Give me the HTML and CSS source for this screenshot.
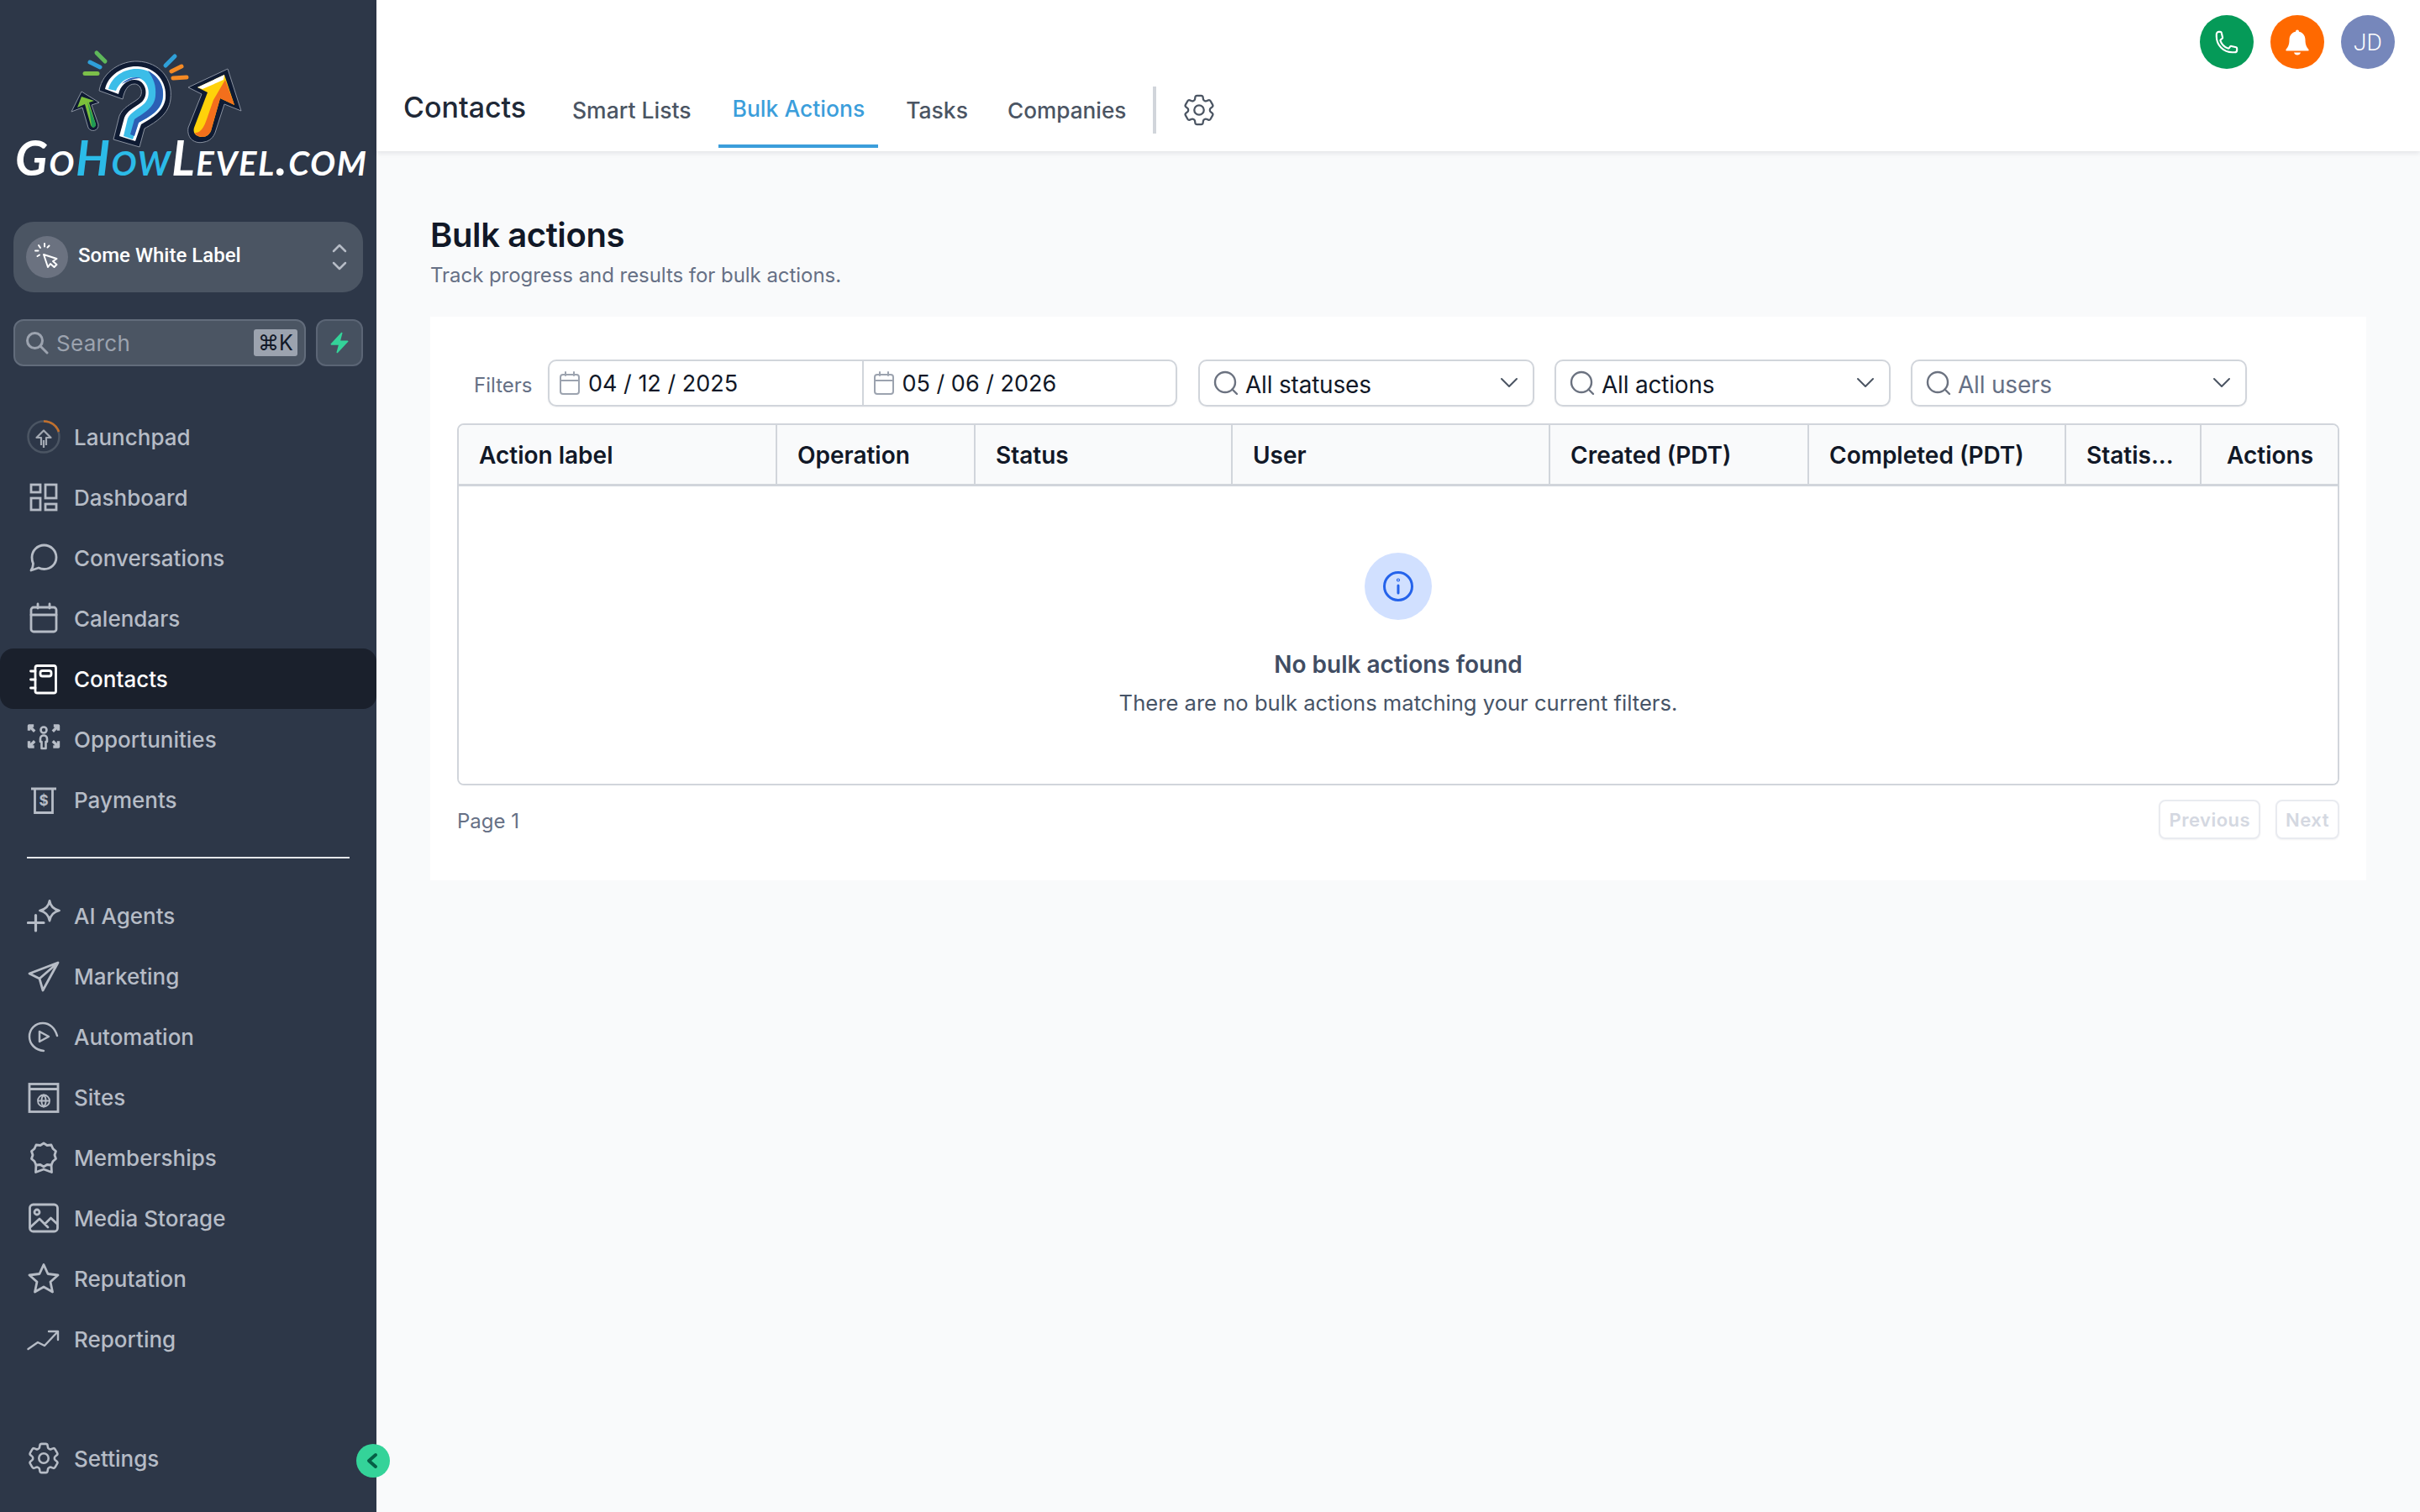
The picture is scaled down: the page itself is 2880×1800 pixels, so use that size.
FILE: index.html
```html
<!DOCTYPE html>
<html lang="en">
<head>
<meta charset="utf-8">
<title>Bulk actions</title>
<link rel="stylesheet" href="styles.css">
</head>
<body>
<div class="app">
<aside class="sidebar">
  <div class="logo">
    <svg class="logo-art" viewBox="0 43 448 178" aria-label="GoHowLevel.com logo">
      <g fill="none" stroke-linecap="round">
        <path d="M115 63l10 10" stroke="#5fb85a" stroke-width="5"/>
        <path d="M107 74l12 6" stroke="#2f9fd8" stroke-width="5"/>
        <path d="M101 87.500h15" stroke="#7cc04a" stroke-width="5"/>
        <path d="M197 78l11-11" stroke="#2f9fd8" stroke-width="5"/>
        <path d="M204 85l12-6" stroke="#f58a24" stroke-width="5"/>
        <path d="M206 93l16-1" stroke="#f58a24" stroke-width="5"/>
      </g>
      <path d="M118 108C122 84 146 72 164 73C190 74 206 94 203 118C201 136 186 145 172 153L166 175L135 166L142 138C146 128 156 124 164 118C172 112 168 100 160 100C152 100 148 108 146 118Z" fill="#0f1b33" stroke="#8a92a0" stroke-width="1"/>
      <path d="M125 106C129 88 148 78 164 79C186 80 199 98 197 117C195 132 182 140 168 148L161 168L142 162L148 140C151 132 160 128 168 122C178 114 174 95 160 95C150 95 143 103 141 112Z" fill="#fff"/>
      <path d="M129 106C133 90 150 81 164 82C184 83 196 99 194 116C192 131 180 138 165 146L158 166L147 162L152 141C155 134 164 130 171 124C182 115 177 92 160 92C149 92 141 100 138 108Z" fill="#3bbde8"/>
      <path d="M176 84C190 92 197 104 193 120C190 132 178 139 165 146L160 162L155 160L160 142C172 134 184 128 185 114C186 102 183 94 176 84ZM145 100C150 94 160 90 168 93C158 93 150 97 145 100Z" fill="#2b5fb5"/>
      <path d="M97 109L85 133L98 128L105 152C108 158 118 156 117 148L109 125L118 122Z" fill="#0f1b33" stroke="#8a92a0" stroke-width="1"/>
      <path d="M97 115L92 128L101 124L108 149C110 153 114 152 114 148L106 122L112 120Z" fill="#7cc03a"/>
      <path d="M104 121L114 148C114 152 110 153 109 150L107 135Z" fill="#1f9a55"/>
      <path d="M271 82L224 104L240 112L224 152C222 165 232 172 243 169C250 168 254 163 256 158L267 124L287 132Z" fill="#0f1b33" stroke="#8a92a0" stroke-width="1"/>
      <path d="M267 89L235 104L247 110L231 152C229 159 234 163 241 163C246 163 249 160 251 156L262 117L279 125Z" fill="#ffd20a"/>
      <path d="M268 95L279 125L262 117L251 156C249 160 246 163 241 163C236 163 232 160 232 158C240 158 243 150 246 142L254 119Z" fill="#f36f1c"/>
      <path d="M267 89L235 104L241 106L266 95Z" fill="#fff"/>
      <text class="logo-text" x="18" y="209" textLength="418" lengthAdjust="spacing"><tspan>Go</tspan><tspan class="logo-cyan">How</tspan><tspan>Level.com</tspan></text>
    </svg>
  </div>

  <div class="switcher">
    <span class="switcher-ico">
      <svg viewBox="0 0 50 50" fill="none" stroke="#fff" stroke-width="2" stroke-linecap="round" stroke-linejoin="round"><path d="M21 22L26 37L29 33L33.500 37L36.500 34L32 30L36.500 27Z"/><path d="M15 11l2 3M22 9v3.500M27.500 11.500l-2 2M11 17.500h3.500M13.500 24l2.500-1.500"/></svg>
    </span>
    <span class="switcher-name">Some White Label</span>
    <svg class="switcher-caret" viewBox="0 0 20 34" fill="none" stroke="#b6bcc6" stroke-width="2.500" stroke-linecap="round" stroke-linejoin="round"><path d="M3 10l7-7 7 7M3 24l7 7 7-7"/></svg>
  </div>

  <div class="search-row">
    <div class="search">
      <svg class="search-ico" viewBox="0 0 28 28" fill="none" stroke="#9ca3af" stroke-width="3" stroke-linecap="round"><circle cx="11.500" cy="11.500" r="9"/><path d="M18 18l8 8"/></svg>
      <span class="search-text">Search</span>
      <kbd class="kbd">⌘K</kbd>
    </div>
    <button class="bolt" type="button" aria-label="Quick actions">
      <svg viewBox="0 0 24 24" fill="#34d399"><path d="M14.615 1.595a.75.75 0 01.359.852L12.982 9.750h7.268a.75.75 0 01.548 1.262l-10.500 11.250a.75.75 0 01-1.272-.71l1.992-7.302H3.750a.75.75 0 01-.548-1.262l10.500-11.250a.75.75 0 01.913-.143z"/></svg>
    </button>
  </div>

  <nav class="nav nav-top">
    <a class="nav-item"><svg class="nav-ico" viewBox="0 0 40 40" fill="none"><circle cx="20" cy="20" r="18.500" stroke="#4b5563" stroke-width="2.500"/><path d="M20 1.500A18.500 18.500 0 0 1 38 14" stroke="#c2702c" stroke-width="2.500"/><path d="M17 30V21H11.500L20 12.500L28.500 21H23V30M20 24V33" stroke="#a3a9b3" stroke-width="2.200" stroke-linejoin="round"/></svg><span>Launchpad</span></a>
    <a class="nav-item"><svg class="nav-ico" viewBox="0 0 40 40" fill="none" stroke="currentColor" stroke-width="2.800"><rect x="5" y="5" width="11" height="9"/><rect x="5" y="21" width="11" height="14"/><rect x="22" y="5" width="13" height="16"/><rect x="22" y="28" width="13" height="7"/></svg><span>Dashboard</span></a>
    <a class="nav-item"><svg class="nav-ico" viewBox="0 0 40 40" fill="none" stroke="currentColor" stroke-width="2.800" stroke-linejoin="round"><path d="M20.500 5C28.500 5 35 11.500 35 19.500C35 27.500 28.500 33.500 20.500 33.500C18 33.500 16 33 14 32L5 35C6.500 32.500 7.500 30 7.500 27C6.500 25 6 22 6 19.500C6 11.500 12.500 5 20.500 5Z"/></svg><span>Conversations</span></a>
    <a class="nav-item"><svg class="nav-ico" viewBox="0 0 40 40" fill="none" stroke="currentColor" stroke-width="2.800" stroke-linecap="round"><rect x="5" y="7" width="30" height="29" rx="3"/><path d="M5 16H35M13 3V8M27 3V8"/></svg><span>Calendars</span></a>
    <a class="nav-item is-active"><svg class="nav-ico" viewBox="0 0 40 40" fill="none" stroke="currentColor" stroke-width="2.800" stroke-linecap="round"><path d="M10 7C10 5.500 11 4.500 12.500 4.500H32C33.500 4.500 34.500 5.500 34.500 7V35C34.500 36.500 33.500 37 32 37H12.500C11 37 10 36 10 35Z"/><rect x="16" y="10.500" width="13" height="6.500" rx="2.500"/><path d="M4.500 11H10M4.500 21H10M4.500 31H10"/></svg><span>Contacts</span></a>
    <a class="nav-item"><svg class="nav-ico" viewBox="0 0 40 40" fill="none" stroke="currentColor" stroke-width="3.400" stroke-linecap="square" stroke-linejoin="round"><circle cx="20" cy="9" r="3.500" stroke-width="2.600"/><path d="M16 23V19.500C16 17 18 15.500 20 15.500C22 15.500 24 17 24 19.500V23H22.500V31H17.500V23Z" stroke-width="2.600"/><path d="M2.500 8V4H6.500M3 4.500L8 9.500M37.500 8V4H33.500M37 4.500L32 9.500M2.500 24V29H7M3 28.500L8 23.500M37.500 24V29H33M37 28.500L32 23.500"/></svg><span>Opportunities</span></a>
    <a class="nav-item"><svg class="nav-ico" viewBox="0 0 40 40" fill="none" stroke="currentColor" stroke-width="2.800"><path d="M5 7H35M9.500 7V35.500H30.500V7"/><text class="dollar" x="20" y="27" text-anchor="middle">$</text></svg><span>Payments</span></a>
  </nav>

  <div class="nav-rule"></div>

  <nav class="nav">
    <a class="nav-item"><svg class="nav-ico" viewBox="0 0 40 40" fill="none" stroke="currentColor" stroke-width="2.800" stroke-linecap="round" stroke-linejoin="round"><path d="M27 2.500C28 8.500 32 12.500 38.500 14C32 15.500 28 20 27 26C26 20 22 15.500 15.500 14C22 12.500 26 8.500 27 2.500Z"/><path d="M1.500 28.500H20M10.500 19.500V38" stroke-width="3.200"/></svg><span>AI Agents</span></a>
    <a class="nav-item"><svg class="nav-ico" viewBox="0 0 40 40" fill="none" stroke="currentColor" stroke-width="2.800" stroke-linejoin="round"><path d="M37 4L3 17L15 23L19 37ZM37 4L15 23"/></svg><span>Marketing</span></a>
    <a class="nav-item"><svg class="nav-ico" viewBox="0 0 40 40" fill="none" stroke="currentColor" stroke-width="2.500" stroke-linecap="round" stroke-linejoin="round"><path d="M36 19C33.500 10 27 4 19 4C10 4 3 11 3 20C3 29 10 36 20 37"/><path d="M15 14L26 20L15 26Z"/></svg><span>Automation</span></a>
    <a class="nav-item"><svg class="nav-ico" viewBox="0 0 40 40" fill="none" stroke="currentColor" stroke-width="2.800"><rect x="3" y="4.500" width="34" height="33"/><path d="M3 10.500H37"/><g stroke-width="1.800"><circle cx="20" cy="24.500" r="7"/><path d="M13 24.500H27M20 17.500C16.500 21 16.500 28 20 31.500C23.500 28 23.500 21 20 17.500Z"/></g></svg><span>Sites</span></a>
    <a class="nav-item"><svg class="nav-ico" viewBox="0 0 40 40" fill="none" stroke="currentColor" stroke-width="2.800" stroke-linejoin="round"><path d="M20 3L24 5.500L29 5L31 9.500L34.500 12.500L33 17L34.500 21.500L31 24.500L29 29L24 28.500L20 31L16 28.500L11 29L9 24.500L5.500 21.500L7 17L5.500 12.500L9 9.500L11 5L16 5.500Z"/><path d="M11 28L10.500 37.500L20 34L29.500 37.500L29 28"/></svg><span>Memberships</span></a>
    <a class="nav-item"><svg class="nav-ico" viewBox="0 0 40 40" fill="none" stroke="currentColor" stroke-width="2.800" stroke-linecap="round" stroke-linejoin="round"><rect x="3.500" y="4" width="33" height="32" rx="4"/><circle cx="12" cy="13" r="3"/><path d="M4 31L15 21L25 31M21.500 27L28.500 20L36 27"/></svg><span>Media Storage</span></a>
    <a class="nav-item"><svg class="nav-ico" viewBox="0 0 40 40" fill="none" stroke="currentColor" stroke-width="2.800" stroke-linejoin="round"><path d="M20 3.500L25 14.500L37 16L28 24L30.500 36L20 30L9.500 36L12 24L3 16L15 14.500Z"/></svg><span>Reputation</span></a>
    <a class="nav-item"><svg class="nav-ico" viewBox="0 0 40 40" fill="none" stroke="currentColor" stroke-width="2.400" stroke-linecap="round" stroke-linejoin="round"><path d="M1.500 32L13 24L21 28L37 11M26 11H37V21"/></svg><span>Reporting</span></a>
  </nav>

  <a class="nav-item nav-settings"><svg class="nav-ico" viewBox="1.500 1.500 21 21" fill="none" stroke="currentColor" stroke-width="1.350" stroke-linejoin="round"><path d="M9.594 3.940c.09-.542.56-.94 1.110-.94h2.593c.55 0 1.020.398 1.110.94l.213 1.281c.063.374.313.686.645.87.074.04.147.083.22.127.324.196.72.257 1.075.124l1.217-.456a1.125 1.125 0 011.370.49l1.296 2.247a1.125 1.125 0 01-.26 1.431l-1.003.827c-.293.24-.438.613-.431.992a6.759 6.759 0 010 .255c-.007.378.138.75.43.99l1.005.828c.424.35.534.954.26 1.430l-1.298 2.247a1.125 1.125 0 01-1.369.491l-1.217-.456c-.355-.133-.75-.072-1.076.124a6.570 6.570 0 01-.22.128c-.331.183-.581.495-.644.869l-.213 1.280c-.09.543-.56.941-1.110.941h-2.594c-.55 0-1.020-.398-1.110-.94l-.213-1.281c-.062-.374-.312-.686-.644-.87a6.520 6.520 0 01-.22-.127c-.325-.196-.72-.257-1.076-.124l-1.217.456a1.125 1.125 0 01-1.369-.49l-1.297-2.247a1.125 1.125 0 01.26-1.431l1.004-.827c.292-.24.437-.613.43-.992a6.932 6.932 0 010-.255c.007-.378-.138-.75-.43-.99l-1.004-.828a1.125 1.125 0 01-.26-1.430l1.297-2.247a1.125 1.125 0 011.370-.491l1.216.456c.356.133.751.072 1.076-.124.072-.044.146-.087.22-.128.332-.183.582-.495.644-.869l.214-1.281z"/><path d="M15 12a3 3 0 11-6 0 3 3 0 016 0z"/></svg><span>Settings</span></a>
  <button class="collapse" type="button" aria-label="Collapse sidebar">
    <svg viewBox="0 0 40 40" fill="none" stroke="#065f46" stroke-width="4" stroke-linecap="round" stroke-linejoin="round"><path d="M23 13L15 20L23 27"/></svg>
  </button>
</aside>

<div class="main">
  <header class="header">
    <div class="actions">
      <span class="round round-green"><svg viewBox="0 0 24 24" fill="none" stroke="#fff" stroke-width="1.700" stroke-linejoin="round"><path d="M2.250 6.750c0 8.284 6.716 15 15 15h2.250a2.250 2.250 0 002.250-2.250v-1.372c0-.516-.351-.966-.852-1.091l-4.423-1.106c-.44-.11-.902.055-1.173.417l-.97 1.293c-.282.376-.769.542-1.210.38a12.035 12.035 0 01-7.143-7.143c-.162-.441.004-.928.38-1.210l1.293-.97c.363-.271.527-.734.417-1.173L6.963 3.102a1.125 1.125 0 00-1.091-.852H4.500A2.250 2.250 0 002.250 4.500v2.250z"/></svg></span>
      <span class="round round-orange"><svg viewBox="0 0 32 32" fill="#fff"><circle cx="16" cy="3.500" r="2"/><path d="M16 3.500C22 3.500 25.500 8 25.500 13.500C25.500 19 27 22 29.500 25C30 25.800 29.500 26.500 28.500 26.500H3.500C2.500 26.500 2 25.800 2.500 25C5 22 6.500 19 6.500 13.500C6.500 8 10 3.500 16 3.500Z"/><path d="M12 28.500H20C19.500 30.500 18 31.500 16 31.500C14 31.500 12.500 30.500 12 28.500Z"/></svg></span>
      <span class="round round-avatar">JD</span>
    </div>
    <div class="tabs">
      <h2 class="tabs-title">Contacts</h2>
      <a class="tab">Smart Lists</a>
      <a class="tab is-current">Bulk Actions</a>
      <a class="tab tab-tasks">Tasks</a>
      <a class="tab tab-last">Companies</a>
      <span class="tabs-rule"></span>
      <svg class="tabs-gear" viewBox="1.500 1.500 21 21" fill="none" stroke="#4b5563" stroke-width="1.200" stroke-linejoin="round"><path d="M9.594 3.940c.09-.542.56-.94 1.110-.94h2.593c.55 0 1.020.398 1.110.94l.213 1.281c.063.374.313.686.645.87.074.04.147.083.22.127.324.196.72.257 1.075.124l1.217-.456a1.125 1.125 0 011.370.49l1.296 2.247a1.125 1.125 0 01-.26 1.431l-1.003.827c-.293.24-.438.613-.431.992a6.759 6.759 0 010 .255c-.007.378.138.75.43.99l1.005.828c.424.35.534.954.26 1.430l-1.298 2.247a1.125 1.125 0 01-1.369.491l-1.217-.456c-.355-.133-.75-.072-1.076.124a6.570 6.570 0 01-.22.128c-.331.183-.581.495-.644.869l-.213 1.280c-.09.543-.56.941-1.110.941h-2.594c-.55 0-1.020-.398-1.110-.94l-.213-1.281c-.062-.374-.312-.686-.644-.87a6.520 6.520 0 01-.22-.127c-.325-.196-.72-.257-1.076-.124l-1.217.456a1.125 1.125 0 01-1.369-.49l-1.297-2.247a1.125 1.125 0 01.26-1.431l1.004-.827c.292-.24.437-.613.43-.992a6.932 6.932 0 010-.255c.007-.378-.138-.75-.43-.99l-1.004-.828a1.125 1.125 0 01-.26-1.430l1.297-2.247a1.125 1.125 0 011.370-.491l1.216.456c.356.133.751.072 1.076-.124.072-.044.146-.087.22-.128.332-.183.582-.495.644-.869l.214-1.281z"/><path d="M15 12a3 3 0 11-6 0 3 3 0 016 0z"/></svg>
    </div>
  </header>

  <main class="content">
    <h1 class="page-title">Bulk actions</h1>
    <p class="page-sub">Track progress and results for bulk actions.</p>

    <section class="card">
      <div class="filters">
        <span class="filters-label">Filters</span>
        <div class="dates">
          <div class="date"><svg class="cal" viewBox="0 0 24 28" fill="none" stroke="#9ca3af" stroke-width="2" stroke-linecap="round"><rect x="1" y="4" width="22" height="23" rx="3"/><path d="M1 11H23M7 1V5M17 1V5"/></svg><span>04 / 12 / 2025</span></div>
          <div class="date date-end"><svg class="cal" viewBox="0 0 24 28" fill="none" stroke="#9ca3af" stroke-width="2" stroke-linecap="round"><rect x="1" y="4" width="22" height="23" rx="3"/><path d="M1 11H23M7 1V5M17 1V5"/></svg><span>05 / 06 / 2026</span></div>
        </div>
        <div class="select"><svg class="sel-search" viewBox="0 0 30 30" fill="none" stroke="#6b7280" stroke-width="2.400" stroke-linecap="round"><circle cx="14" cy="14" r="12"/><path d="M22.500 22.500L28 28"/></svg><span>All statuses</span><svg class="sel-caret" viewBox="0 0 24 24" fill="none" stroke="#4b5563" stroke-width="2" stroke-linecap="round" stroke-linejoin="round"><path d="M3 7L12 16L21 7"/></svg></div>
        <div class="select"><svg class="sel-search" viewBox="0 0 30 30" fill="none" stroke="#6b7280" stroke-width="2.400" stroke-linecap="round"><circle cx="14" cy="14" r="12"/><path d="M22.500 22.500L28 28"/></svg><span>All actions</span><svg class="sel-caret" viewBox="0 0 24 24" fill="none" stroke="#4b5563" stroke-width="2" stroke-linecap="round" stroke-linejoin="round"><path d="M3 7L12 16L21 7"/></svg></div>
        <div class="select is-empty"><svg class="sel-search" viewBox="0 0 30 30" fill="none" stroke="#6b7280" stroke-width="2.400" stroke-linecap="round"><circle cx="14" cy="14" r="12"/><path d="M22.500 22.500L28 28"/></svg><span>All users</span><svg class="sel-caret" viewBox="0 0 24 24" fill="none" stroke="#4b5563" stroke-width="2" stroke-linecap="round" stroke-linejoin="round"><path d="M3 7L12 16L21 7"/></svg></div>
      </div>

      <div class="table">
        <div class="thead">
          <div class="th">Action label</div>
          <div class="th">Operation</div>
          <div class="th">Status</div>
          <div class="th">User</div>
          <div class="th">Created (PDT)</div>
          <div class="th">Completed (PDT)</div>
          <div class="th">Statis...</div>
          <div class="th th-last">Actions</div>
        </div>
        <div class="empty">
          <span class="empty-ico"><svg viewBox="0 0 40 40" fill="none" stroke="#2563eb" stroke-width="3" stroke-linecap="round"><circle cx="20" cy="20" r="16.500"/><path d="M20 19V28"/><circle cx="20" cy="12.500" r="0.600"/></svg></span>
          <h3 class="empty-title">No bulk actions found</h3>
          <p class="empty-text">There are no bulk actions matching your current filters.</p>
        </div>
      </div>

      <div class="pager">
        <span class="pager-page">Page 1</span>
        <div class="pager-btns">
          <button class="pager-btn" type="button" disabled>Previous</button>
          <button class="pager-btn" type="button" disabled>Next</button>
        </div>
      </div>
    </section>
  </main>
</div>
</div>
</body>
</html>
```
FILE: styles.css
```css
* { box-sizing: border-box; }
html, body { margin: 0; padding: 0; height: 100%; }
body { font-family: "Inter", "Liberation Sans", sans-serif; background: #f9fafb; color: #111827; overflow: hidden; }
h1, h2, h3, p { margin: 0; }
button { font-family: inherit; }

.app { display: flex; width: 2880px; height: 1800px; }

/* Sidebar */
.sidebar { position: relative; width: 448px; flex: none; height: 100%; background: #2d3748; display: flex; flex-direction: column; }
.logo { height: 178px; margin-top: 43px; flex: none; }
.logo-art { display: block; width: 448px; height: 178px; }
.logo-text { font-family: "Lato", sans-serif; font-style: italic; font-weight: 700; font-size: 57px; font-variant: small-caps; fill: #fff; }
.logo-cyan { fill: #2bbbe8; }

.switcher { margin: 43px 16px 0; height: 84px; flex: none; background: #4b5563; border-radius: 24px; display: flex; align-items: center; padding: 0 18px 0 15px; }
.switcher-ico { width: 50px; height: 50px; border-radius: 50%; background: #6b7280; flex: none; }
.switcher-ico svg { display: block; width: 50px; height: 50px; }
.switcher-name { font-family: "Roboto", sans-serif; font-weight: 500; font-size: 24px; color: #fff; margin-left: 12px; flex: 1; position: relative; top: -2px; }
.switcher-caret { width: 20px; height: 34px; flex: none; }

.search-row { display: flex; gap: 12px; margin: 32px 16px 0; flex: none; }
.search { flex: 1; height: 56px; background: #4b5563; border: 2px solid #626c7b; border-radius: 12px; display: flex; align-items: center; padding: 0 8px 0 12px; }
.search-ico { width: 28px; height: 28px; flex: none; }
.search-text { font-size: 26px; letter-spacing: 0.3px; color: #9ca3af; margin-left: 9px; flex: 1; font-weight: 400; }
.kbd { font-family: "Inter", sans-serif; width: 52px; height: 32px; background: #9ca3af; color: #111827; border-radius: 3px; font-size: 25px; display: flex; align-items: center; justify-content: center; }
.bolt { width: 56px; height: 56px; padding: 0; background: #465160; border: 2px solid #5b6575; border-radius: 12px; display: flex; align-items: center; justify-content: center; }
.bolt svg { width: 28px; height: 28px; }

.nav { display: flex; flex-direction: column; flex: none; }
.nav-top { margin-top: 48px; }
.nav-item { height: 72px; display: flex; align-items: center; gap: 16px; padding-left: 32px; color: #b6bcc6; font-size: 26px; font-weight: 500; border-radius: 16px; flex: none; }
.nav-ico { width: 40px; height: 40px; flex: none; }
.nav-item.is-active { background: #1a202c; color: #fff; }
.dollar { font-family: "Inter", sans-serif; font-size: 17px; font-weight: 700; fill: currentColor; stroke: none; }
.nav-rule { height: 2px; background: #e5e7eb; margin: 32px; flex: none; }
.nav-settings { margin-top: auto; margin-bottom: 28px; }
.collapse { position: absolute; left: 424px; top: 1719px; width: 40px; height: 40px; padding: 0; border: 0; border-radius: 50%; background: #34d399; }
.collapse svg { display: block; width: 40px; height: 40px; }

/* Main */
.main { flex: 1; min-width: 0; display: flex; flex-direction: column; }
.header { height: 180px; flex: none; background: #fff; box-shadow: 0 2px 6px rgba(17, 24, 39, 0.1); padding-top: 18px; position: relative; }
.actions { display: flex; justify-content: flex-end; gap: 20px; padding-right: 30px; }
.round { width: 64px; height: 64px; border-radius: 50%; display: flex; align-items: center; justify-content: center; }
.round-green { background: #059a58; }
.round-green svg { width: 30px; height: 30px; }
.round-orange { background: #ff6900; }
.round-orange svg { width: 32px; height: 32px; }
.round-avatar { background: #7687bb; color: #fff; font-family: "Roboto", sans-serif; font-size: 28px; font-weight: 300; }

.tabs { display: flex; align-items: center; height: 90px; margin-top: 4px; padding-left: 32px; }
.tabs-title { font-size: 34px; font-weight: 500; color: #1f2937; width: 185px; position: relative; top: -4px; }
.tab { height: 90px; display: flex; align-items: center; padding: 0 16px; margin-right: 17px; font-size: 26.500px; font-weight: 500; color: #4b5563; }
.tab.is-current { color: #3b9edb; border-bottom: 4px solid #3b9edb; }
.tab-tasks { margin-right: 15px; }
.tab-last { margin-right: 0; font-size: 26.200px; }
.tabs-rule { width: 4px; height: 56px; background: #d1d5db; margin-left: 16px; }
.tabs-gear { width: 40px; height: 40px; margin-left: 31px; }

/* Content */
.content { flex: 1; padding: 76px 64px 0; }
.page-title { font-size: 40px; line-height: 48px; font-weight: 600; color: #111827; letter-spacing: -0.4px; }
.page-sub { font-size: 24px; letter-spacing: -0.05px; line-height: 32px; margin-top: 8px; color: #667085; }
.card { margin-top: 33px; background: #fff; padding: 51px 32px 49px; }

.filters { display: flex; align-items: center; height: 56px; padding-left: 20px; }
.filters-label { font-size: 24px; color: #667085; width: 88px; flex: none; position: relative; top: 2px; }
.dates { width: 749px; height: 56px; flex: none; display: flex; background: #fff; border: 2px solid #d1d5db; border-radius: 10px; box-shadow: 0 1px 2px rgba(16, 24, 40, 0.05); margin-right: 25px; }
.date { display: flex; align-items: center; gap: 10px; padding-left: 12px; flex: 1; font-size: 27px; color: #111827; }
.date-end { border-left: 2px solid #d1d5db; }
.cal { width: 24px; height: 28px; flex: none; }
.select { width: 400px; height: 56px; flex: none; display: flex; align-items: center; background: #fff; border: 2px solid #d1d5db; border-radius: 10px; box-shadow: 0 1px 2px rgba(16, 24, 40, 0.05); margin-right: 24px; padding: 0 16px; font-size: 28px; letter-spacing: -0.2px; color: #111827; }
.sel-search { width: 30px; height: 30px; flex: none; margin-right: 8px; }
.select span { flex: 1; position: relative; top: 2px; }
.select.is-empty span { color: #667085; }
.sel-caret { width: 24px; height: 24px; flex: none; }

.table { margin-top: 20px; border: 2px solid #d1d5db; border-radius: 8px; overflow: hidden; }
.thead { display: grid; grid-template-columns: 377px 236px 306px 378px 308px 306px 161px 1fr; height: 73px; background: #f9fafb; border-bottom: 3px solid #d1d5db; }
.th { display: flex; align-items: center; padding: 2px 0 0 24px; font-size: 28px; font-weight: 600; color: #111827; border-left: 2px solid #d1d5db; white-space: nowrap; }
.th:first-child { border-left: 0; }
.th-last { padding-left: 30px; }
.empty { height: 354px; background: #fff; display: flex; flex-direction: column; align-items: center; padding-top: 79px; }
.empty-ico { width: 80px; height: 80px; border-radius: 50%; background: #d1e0ff; display: flex; align-items: center; justify-content: center; }
.empty-ico svg { width: 40px; height: 40px; }
.empty-title { font-size: 28px; line-height: 40px; font-weight: 600; color: #414d63; margin-top: 33px; }
.empty-text { font-size: 25.600px; line-height: 40px; color: #475467; margin-top: 6px; }

.pager { display: flex; align-items: center; justify-content: space-between; margin-top: 17px; height: 47px; }
.pager-page { font-size: 24px; color: #667085; position: relative; top: 2px; }
.pager-btns { display: flex; gap: 18px; }
.pager-btn { height: 47px; padding: 0 10px; background: #fff; border: 2px solid #e9ebf0; border-radius: 8px; box-shadow: 0 1px 2px rgba(16, 24, 40, 0.05); font-size: 22px; letter-spacing: 0.5px; font-weight: 600; color: #d4d8e1; }
```
